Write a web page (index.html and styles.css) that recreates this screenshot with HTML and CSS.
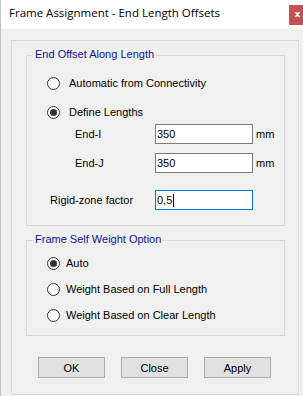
FILE: index.html
```html
<!DOCTYPE html>
<html>
<head>
<meta charset="utf-8">
<link rel="stylesheet" href="styles.css">
</head>
<body>
<div class="window">
  <div class="titlebar">
    <span class="title">Frame Assignment - End Length Offsets</span>
    <span class="close">x</span>
  </div>
  <div class="client">
    <div class="panel">
      <div class="group g1">
        <span class="legend">End Offset Along Length</span>
        <div class="row radio-row r1"><span class="radio"></span><span class="rtext wide">Automatic from Connectivity</span></div>
        <div class="row radio-row r2"><span class="radio checked"></span><span class="rtext wide">Define Lengths</span></div>
        <div class="row field-row f1"><span class="flabel">End-I</span><span class="input">350</span><span class="unit">mm</span></div>
        <div class="row field-row f2"><span class="flabel">End-J</span><span class="input">350</span><span class="unit">mm</span></div>
        <div class="row field-row f3"><span class="flabel rigid">Rigid-zone factor</span><span class="input focused">0,5<span class="caret"></span></span></div>
      </div>
      <div class="group g2">
        <span class="legend">Frame Self Weight Option</span>
        <div class="row radio-row s1"><span class="radio checked"></span><span class="rtext">Auto</span></div>
        <div class="row radio-row s2"><span class="radio"></span><span class="rtext">Weight Based on Full Length</span></div>
        <div class="row radio-row s2"><span class="radio"></span><span class="rtext">Weight Based on Clear Length</span></div>
      </div>
      <div class="buttons">
        <span class="btn">OK</span>
        <span class="btn">Close</span>
        <span class="btn">Apply</span>
      </div>
    </div>
  </div>
</div>
</body>
</html>
```
FILE: styles.css
```css
html, body {
  margin: 0;
  padding: 0;
}
body {
  width: 303px;
  height: 396px;
  overflow: hidden;
  background: #f0f0f0;
  font-family: "Liberation Sans", Arial, sans-serif;
  font-size: 11px;
  color: #000;
}
.window {
  border-left: 1px solid #c4c4c4;
  height: 396px;
  box-sizing: border-box;
}
.titlebar {
  height: 29px;
  background: #fff;
  display: flex;
  align-items: flex-start;
  justify-content: space-between;
}
.title {
  font-family: "Open Sans", "Noto Sans", sans-serif;
  font-size: 11.5px;
  line-height: 16px;
  margin-top: 5px;
  margin-left: 8px;
  color: #000;
}
.close {
  width: 14px;
  height: 20px;
  margin-top: 5px;
  background: #c75050;
  color: #fff;
  font-family: "DejaVu Sans", sans-serif;
  font-weight: bold;
  font-size: 9px;
  line-height: 19px;
  text-align: center;
  box-sizing: border-box;
  padding-left: 3px;
}
.client {
  padding-top: 11px;
  padding-left: 10px;
}
.panel {
  width: 288px;
  height: 355px;
  box-sizing: border-box;
  border: 1px solid #dadada;
}
.group {
  position: relative;
  margin-left: 14px;
  width: 259px;
  box-sizing: border-box;
  border: 1px solid #dadada;
}
.g1 {
  margin-top: 14px;
  height: 171px;
}
.g2 {
  margin-top: 14px;
  height: 96px;
}
.legend {
  position: absolute;
  top: -8px;
  left: 6px;
  padding: 0 2px;
  background: #f0f0f0;
  color: #10109a;
  line-height: 13px;
}
.row {
  display: flex;
  align-items: center;
  height: 20px;
}
.radio-row {
  padding-left: 20px;
}
.r1 { margin-top: 17px; }
.r2 { margin-top: 9px; }
.f1 { margin-top: 2px; }
.f2 { margin-top: 9px; }
.f3 { margin-top: 17px; }
.s1 { margin-top: 12px; }
.s2 { margin-top: 6px; }
.radio {
  width: 13px;
  height: 13px;
  box-sizing: border-box;
  border: 1px solid #333;
  border-radius: 50%;
  background: #fff;
  display: flex;
  align-items: center;
  justify-content: center;
  flex: none;
}
.radio.checked::after {
  content: "";
  width: 7px;
  height: 7px;
  border-radius: 50%;
  background: #333;
}
.rtext {
  margin-left: 6px;
}
.rtext.wide {
  margin-left: 9px;
}
.field-row {
  padding-left: 48px;
}
.flabel {
  width: 80px;
  flex: none;
}
.flabel.rigid {
  margin-left: -25px;
  width: 105px;
}
.input {
  width: 98px;
  height: 20px;
  box-sizing: border-box;
  border: 1px solid #7a7a7a;
  background: #fff;
  padding-left: 1px;
  line-height: 18px;
  display: flex;
  align-items: center;
}
.input.focused {
  border-color: #0078d7;
}
.caret {
  width: 1px;
  height: 13px;
  background: #000;
  margin-left: 1px;
}
.unit {
  margin-left: 3px;
}
.buttons {
  display: flex;
  gap: 16px;
  margin-top: 21px;
  padding-left: 26px;
}
.btn {
  width: 67px;
  height: 21px;
  box-sizing: border-box;
  border: 1px solid #adadad;
  background: #e1e1e1;
  display: flex;
  align-items: center;
  justify-content: center;
}
```
